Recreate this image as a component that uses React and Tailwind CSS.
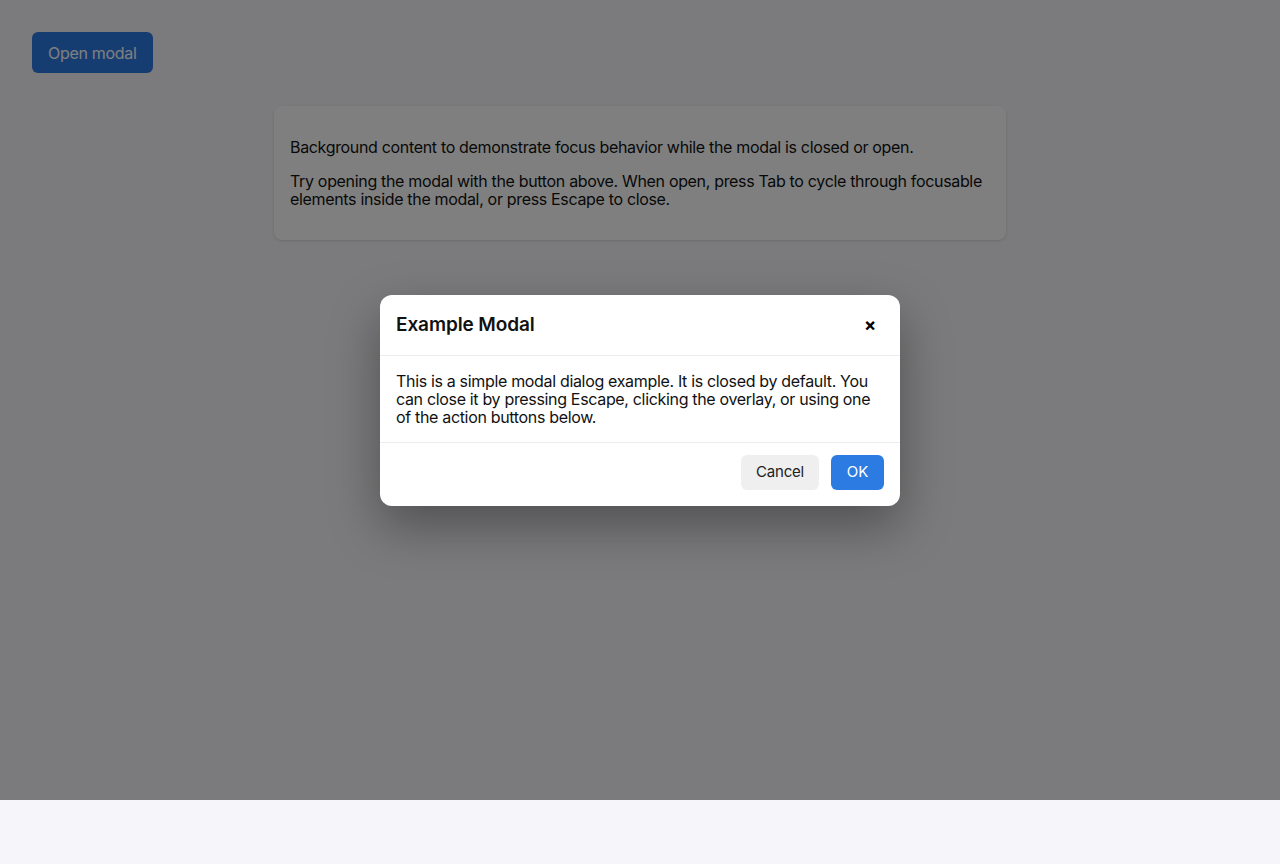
export default function App() {
  return (
    <div className="min-h-[864px] bg-[#f6f6fa] font-['Inter',sans-serif] text-[#111]">
      <div className="relative h-[800px] p-8">
        <button className="h-[41px] px-4 rounded-md bg-[#2c7ae4] text-white text-base tracking-[-0.3px]">
          Open modal
        </button>

        <div className="w-[732px] mx-auto mt-[33px] bg-white rounded-lg shadow-sm px-4 py-4 text-base leading-[18px] tracking-[-0.33px]">
          <p className="my-4">
            Background content to demonstrate focus behavior while the modal is closed or open.
          </p>
          <p className="my-4">
            Try opening the modal with the button above. When open, press Tab to cycle through focusable
            elements inside the modal, or press Escape to close.
          </p>
        </div>

        <div className="absolute inset-0 bg-black/50 flex items-center justify-center">
          <div className="w-[520px] bg-white rounded-xl shadow-[0_20px_50px_rgba(0,0,0,0.35)] overflow-hidden">
            <div className="flex items-center justify-between px-4 py-4 border-b border-[#ececec]">
              <h2 className="text-[19px] leading-7 font-semibold tracking-[-0.1px]">Example Modal</h2>
              <button className="w-7 h-7 flex items-center justify-center text-lg font-bold leading-none text-black">
                ×
              </button>
            </div>
            <div className="p-4 text-base leading-[18px] tracking-[-0.33px]">
              This is a simple modal dialog example. It is closed by default. You can close it by pressing
              Escape, clicking the overlay, or using one of the action buttons below.
            </div>
            <div className="flex justify-end gap-3 px-4 pt-3 pb-4 border-t border-[#ececec]">
              <button className="h-[35px] w-[78px] rounded-md bg-[#efefef] text-[15px] text-[#222] tracking-[-0.2px]">
                Cancel
              </button>
              <button className="h-[35px] w-[53px] rounded-md bg-[#2b7be2] text-[15px] text-white">
                OK
              </button>
            </div>
          </div>
        </div>
      </div>
    </div>
  );
}
